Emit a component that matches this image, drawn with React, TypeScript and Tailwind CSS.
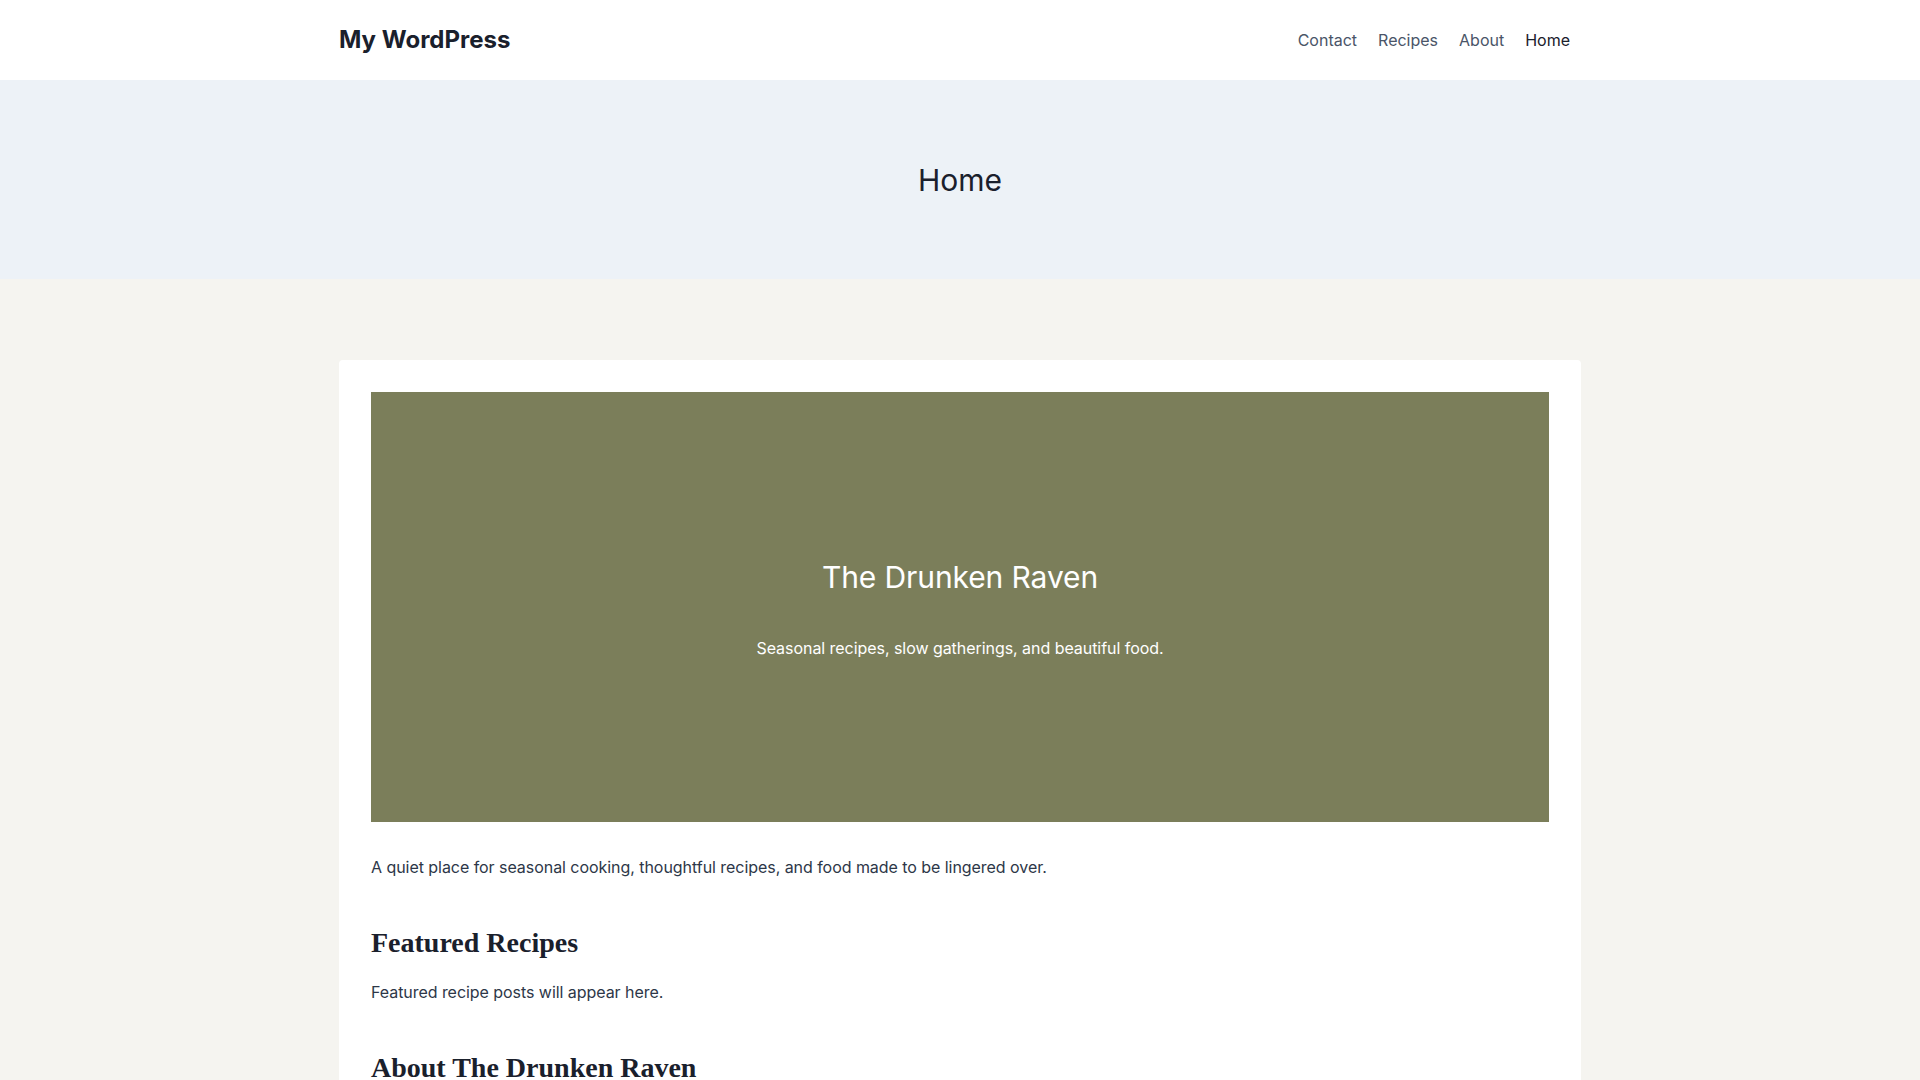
export default function App() {
  return (
    <div className="min-h-screen bg-[#f5f4f0] font-['Inter',sans-serif] text-[#1a202c]">
      <header className="bg-white">
        <div className="mx-auto flex h-20 w-[1242px] items-center justify-between">
          <span className="text-2xl font-bold text-[#1a202c]">My WordPress</span>
          <nav className="mr-[11px] flex items-center gap-[21px] text-base">
            <a className="text-[#4a5568]">Contact</a>
            <a className="text-[#4a5568]">Recipes</a>
            <a className="text-[#4a5568]">About</a>
            <a className="text-[#1a202c]">Home</a>
          </nav>
        </div>
      </header>

      <section className="flex h-[199px] items-center justify-center bg-[#edf2f7] pt-[2px]">
        <h1 className="text-[30px] font-normal leading-tight text-[#1a202c]">Home</h1>
      </section>

      <main className="pt-[81px] pb-16">
        <article className="mx-auto w-[1242px] rounded bg-white p-8">
          <div className="flex h-[430px] flex-col items-center justify-center bg-[#7b7e5a] pt-[6px] text-white">
            <h2 className="mb-[41px] text-[30px] font-normal leading-[1.2] tracking-[-0.1px]">The Drunken Raven</h2>
            <p className="text-base leading-[1.6] tracking-[-0.05px]">Seasonal recipes, slow gatherings, and beautiful food.</p>
          </div>

          <p className="mt-[33px] text-base leading-[1.6] tracking-[-0.05px] text-[#2d3748]">
            A quiet place for seasonal cooking, thoughtful recipes, and food made to be lingered over.
          </p>

          <h3 className="mt-[45px] mb-[21px] font-['Liberation_Serif',serif] text-[28px] font-bold leading-[1.2] text-[#1a202c]">
            Featured Recipes
          </h3>
          <p className="text-base leading-[1.6] tracking-[-0.05px] text-[#2d3748]">Featured recipe posts will appear here.</p>

          <h3 className="mt-[45px] mb-5 font-['Liberation_Serif',serif] text-[28px] font-bold leading-[1.2] text-[#1a202c]">
            About The Drunken Raven
          </h3>
          <p className="text-base leading-[1.6] tracking-[-0.05px] text-[#2d3748]">
            The Drunken Raven is a home for recipes that follow the seasons and meals meant to be shared.
          </p>
        </article>
      </main>
    </div>
  )
}
